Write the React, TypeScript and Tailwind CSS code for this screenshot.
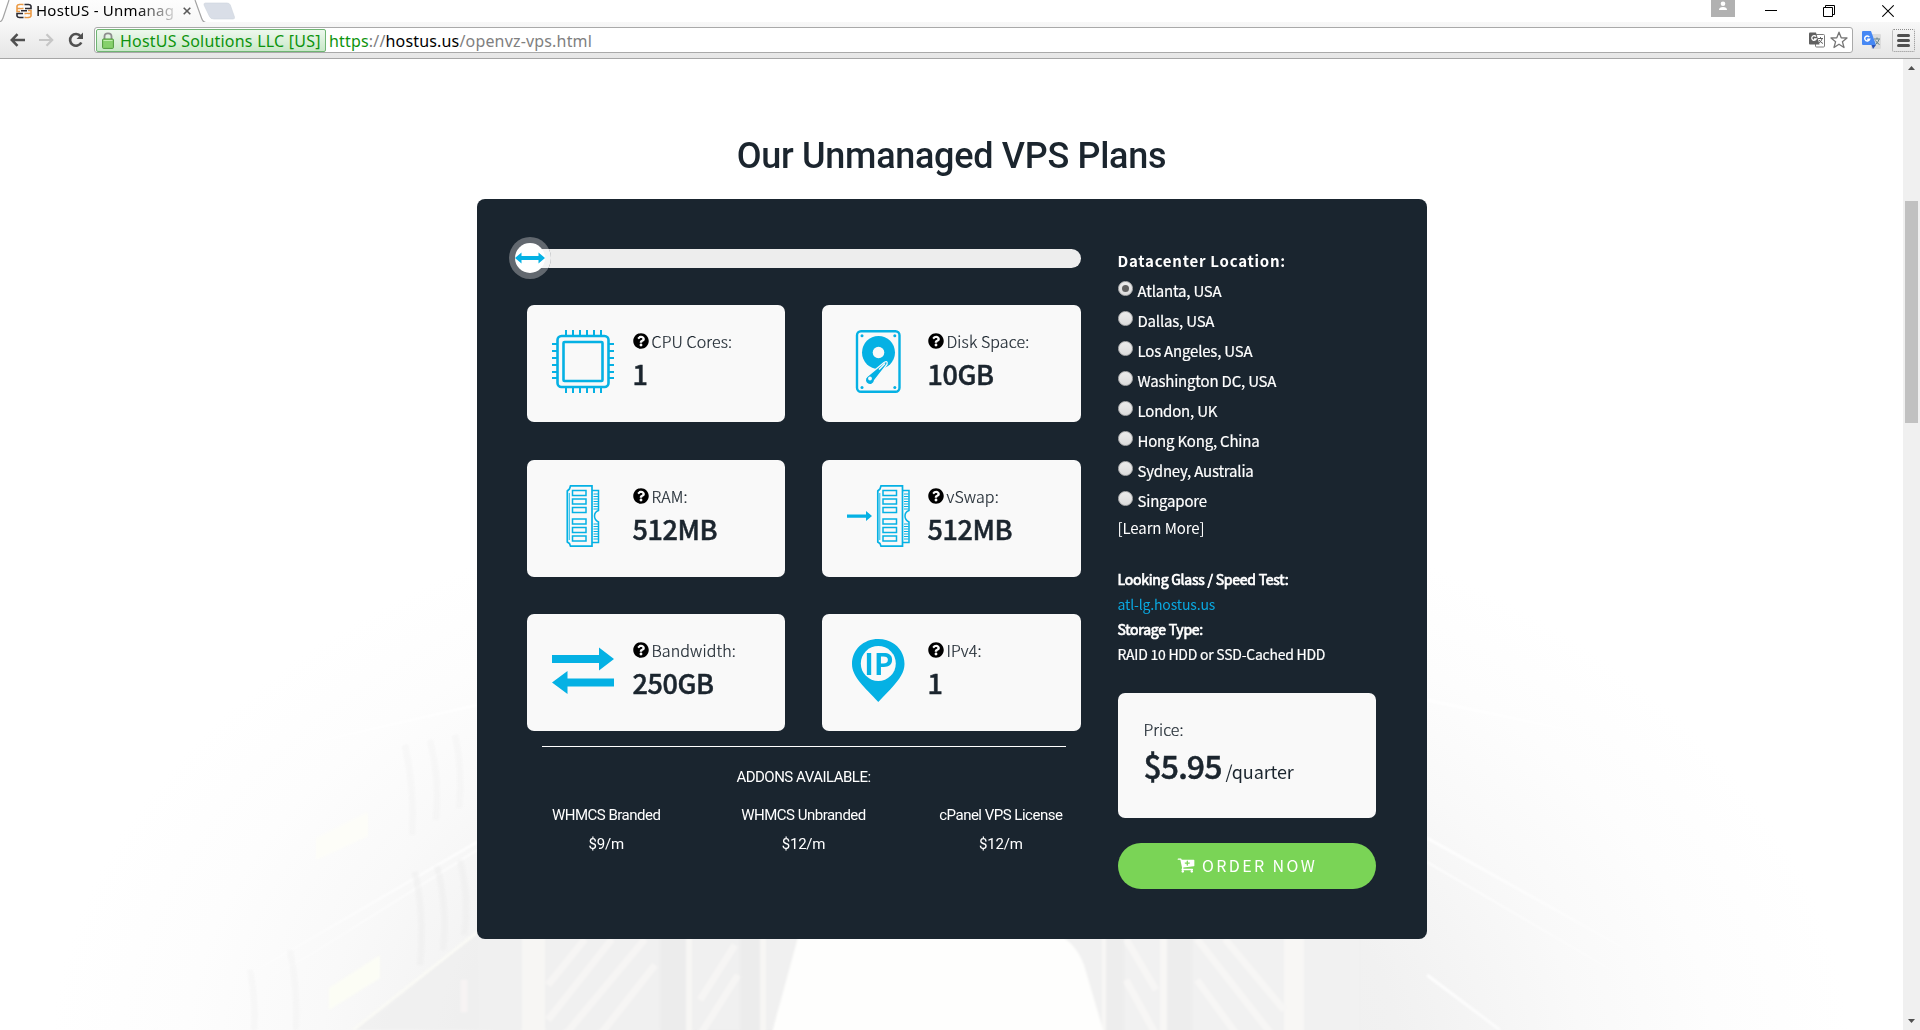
import type { ReactNode } from "react";
import { FaQuestionCircle } from "react-icons/fa";

const BLUE = "#05b1e4";

/* ---------- browser chrome ---------- */

function TabStrip() {
  return (
    <div className="relative flex h-[22px] items-start bg-white">
      <svg className="absolute left-0 top-0" width="1920" height="24" viewBox="0 0 1920 24" fill="none">
        <defs>
          <linearGradient id="tab" x1="0" y1="0" x2="0" y2="1">
            <stop offset="0" stopColor="#fdfdfd" />
            <stop offset="1" stopColor="#f7f7f7" />
          </linearGradient>
        </defs>
        <path d="M0 24V22Q2 21 3 18L9 0H195L201.500 18Q203 22.500 206 22.500H1920V24Z" fill="url(#tab)" />
        <path d="M0 22Q2 21 3 18L9 0M195 0L201.500 18Q203 22.500 206 22.500H1920" stroke="#a3a3a3" strokeWidth="1.200" />
        <path d="M205.500 3H227Q229.500 3 230.300 5L234.500 17Q235 19 233 19H214Q210.500 19 209.500 16.500L204 5Q203.500 3 205.500 3Z" fill="#d9dee7" stroke="#cfd5de" strokeWidth="0.600" />
      </svg>
      <svg className="relative ml-[16px] mt-[3px]" width="16" height="16" viewBox="0 0 16 16" fill="none" strokeWidth="1.600">
        <path d="M7.500 1.500H3.500Q1.500 1.500 1 3V5.500H7.500M1 5.500V8.500H4" stroke="#eb9a45" />
        <path d="M8.500 10.500H15V13Q14.500 14.500 12.500 14.500H8.500M15 10V7.500H12" stroke="#eb9a45" />
        <path d="M8.500 1.500H12.500Q14.500 1.500 15 3V5.500H9M5 7.800H11" stroke="#2b2b33" />
        <path d="M7 10.500H1V13Q1.500 14.500 3.500 14.500H7.500" stroke="#2b2b33" />
        <path d="M5 2V5M11 11V14" stroke="#fff" strokeWidth="1" />
      </svg>
      <div className="relative ml-1 h-[22px] w-[140px] whitespace-nowrap font-['Noto_Sans'] text-[15px] leading-[20px] tracking-[0.25px] text-black [mask-image:linear-gradient(to_right,black_100px,transparent_145px)]">
        HostUS - Unmanag
      </div>
      <svg className="relative ml-[7px] mt-[7px]" width="8" height="8" viewBox="0 0 8 8">
        <path d="M0.700 0.700L7.300 7.300M7.300 0.700L0.700 7.300" stroke="#5a5a5a" strokeWidth="1.600" />
      </svg>
      <div className="relative ml-auto flex h-[17px] items-start">
        <div className="flex h-[17px] w-6 justify-center bg-[#b1b1b1]">
          <svg width="10" height="10" viewBox="0 0 10 10" fill="white">
            <circle cx="5" cy="3.800" r="2.300" />
            <path d="M1 10Q1 7 5 7T9 10Z" />
          </svg>
        </div>
        <svg className="ml-[30px]" width="12" height="17" viewBox="0 0 12 17">
          <path d="M0 10.500H12" stroke="black" />
        </svg>
        <svg className="ml-[46px]" width="12" height="17" viewBox="0 0 12 17" fill="none" stroke="black">
          <path d="M0.500 7.500H9.500V16.500H0.500ZM2.500 7V5.500H11.500V14.500H10" />
        </svg>
        <svg className="ml-[47px] mr-[26px]" width="12" height="17" viewBox="0 0 12 17">
          <path d="M0.300 5.300L11.700 16.700M11.700 5.300L0.300 16.700" stroke="black" strokeWidth="1.100" />
        </svg>
      </div>
    </div>
  );
}

function Toolbar() {
  return (
    <div className="relative flex h-[37px] items-center border-b border-[#a6a6a6] bg-gradient-to-b from-[#f8f8f8] to-[#e6e6e6]">
      <svg className="ml-[10px]" width="15" height="14" viewBox="0 0 15 14" fill="none" stroke="#505050" strokeWidth="2.500">
        <path d="M15 7H2M7.500 1.200L1.800 7L7.500 12.800" />
      </svg>
      <svg className="ml-[14px]" width="15" height="14" viewBox="0 0 15 14" fill="none" stroke="#c6c6c6" strokeWidth="2.200">
        <path d="M0 7H13M7.500 1.200L13.200 7L7.500 12.800" />
      </svg>
      <svg className="ml-[14px]" width="16" height="16" viewBox="0 0 16 16" fill="none">
        <path d="M12.600 4.200A5.900 5.900 0 1 0 13.300 10.500" stroke="#505050" strokeWidth="2.600" />
        <path d="M15 0.500V7H8.500Z" fill="#505050" />
      </svg>
      <div className="ml-[10px] flex h-[26px] w-[1759px] items-center rounded-[3px] border border-[#a9a9a9] bg-white pl-px">
        <div className="flex h-[23px] w-[230px] items-center rounded-[2px] border border-[#6fb573] bg-gradient-to-b from-[#eef8ee] to-[#c9e8c8] pl-[5px]">
          <svg width="12" height="17" viewBox="0 0 12 17">
            <path d="M2.500 8V4.500Q2.500 1.300 6 1.300T9.500 4.500V8" fill="none" stroke="#8d8d8d" strokeWidth="1.800" />
            <rect x="0.600" y="7" width="10.800" height="9.400" rx="0.800" fill="#86d16c" stroke="#4f9a3b" />
            <path d="M1.500 8.500H10.500" stroke="#c2eeb0" />
          </svg>
          <span className="ml-[6px] mt-px whitespace-nowrap font-['Noto_Sans'] text-[16px] leading-[20px] tracking-[0.22px] text-[#0d930d]">HostUS Solutions LLC [US]</span>
        </div>
        <div className="ml-[3px] mt-px whitespace-nowrap font-['Noto_Sans'] text-[16px] leading-[22px] tracking-[0.17px] text-[#808080]">
          <span className="text-[#0d930d]">https</span>://<span className="text-black">hostus.us</span>/openvz-vps.html
        </div>
        <svg className="ml-auto" width="16" height="16" viewBox="0 0 16 16">
          <rect x="6.500" y="2.500" width="9" height="12.500" rx="1" fill="white" stroke="#7a7a7a" />
          <path d="M0 1.500Q0 0.500 1 0.500H7L10.500 12.500H1Q0 12.500 0 11.500Z" fill="#606060" />
          <path d="M7 4.700A2.300 2.300 0 1 0 7.200 7H5" stroke="white" strokeWidth="1.300" fill="none" />
          <path d="M9 6.500H14M11.500 5V6.500M13 7Q12 10 9.500 11.500M10 8Q11.500 10.500 14 11.500" stroke="#606060" fill="none" />
        </svg>
        <svg className="ml-[5px] mr-1" width="18" height="18" viewBox="0 0 18 18">
          <path d="M9 1.200L11.200 6.800L17 7L12.400 10.700L14 16.500L9 13.200L4 16.500L5.600 10.700L1 7L6.800 6.800Z" fill="white" stroke="#757575" strokeWidth="1.300" strokeLinejoin="round" />
        </svg>
      </div>
      <svg className="ml-[9px]" width="19" height="20" viewBox="0 0 19 20">
        <rect x="9" y="4" width="10" height="15" rx="1" fill="#dcdcdc" />
        <path d="M0 2Q0 1 1 1H9L14 15H1Q0 15 0 14Z" fill="#4688f4" />
        <path d="M9.500 15H14L11 19Z" fill="#2a52b8" />
        <path d="M7.300 7A2.500 2.500 0 1 0 7.600 9.200H5.200" stroke="white" strokeWidth="1.500" fill="none" />
        <path d="M12 9H18M15 7.500V9M17 9.500Q16 13 13.500 14.500M13.500 10.500Q15 13.500 17.500 14.500" stroke="#5f7f86" fill="none" />
      </svg>
      <div className="ml-[11px] flex h-[23px] w-[23px] flex-col items-center justify-center gap-[2px] rounded-[2px] border border-dotted border-[#8c8c8c]">
        <i className="h-[3px] w-[13px] rounded-sm bg-[#505050]" />
        <i className="h-[3px] w-[13px] rounded-sm bg-[#505050]" />
        <i className="h-[3px] w-[13px] rounded-sm bg-[#505050]" />
      </div>
    </div>
  );
}

function Scrollbar() {
  return (
    <div className="flex w-[17px] flex-col items-center bg-[#f0f0f0]">
      <svg className="mt-[7px]" width="7" height="4" viewBox="0 0 7 4">
        <path d="M0 4L3.500 0L7 4Z" fill="#505050" />
      </svg>
      <div className="mt-[131px] h-[222px] w-[13px] bg-[#c1c1c1]" />
      <svg className="mb-[7px] mt-auto" width="7" height="4" viewBox="0 0 7 4">
        <path d="M0 0L3.500 4L7 0Z" fill="#505050" />
      </svg>
    </div>
  );
}

/* ---------- faded server-room backdrop ---------- */

function Backdrop() {
  return (
    <svg className="absolute left-0 top-0" width="1903" height="971" viewBox="0 59 1903 971" fill="none">
      <defs>
        <radialGradient id="glow" gradientUnits="userSpaceOnUse" cx="950" cy="1060" r="900" gradientTransform="translate(950 1060) scale(1 0.650) translate(-950 -1060)">
          <stop offset="0" stopColor="#ebebeb" />
          <stop offset="0.500" stopColor="#f1f1f1" />
          <stop offset="0.700" stopColor="#f9f9f9" />
          <stop offset="0.850" stopColor="#fdfdfd" />
          <stop offset="1" stopColor="#ffffff" />
        </radialGradient>
        <linearGradient id="rackFade" gradientUnits="userSpaceOnUse" x1="150" y1="0" x2="477" y2="0">
          <stop offset="0" stopColor="#fff" stopOpacity="0" />
          <stop offset="1" stopColor="#fff" stopOpacity="0.900" />
        </linearGradient>
        <linearGradient id="rackFadeRight" gradientUnits="userSpaceOnUse" x1="1427" y1="0" x2="1700" y2="0">
          <stop offset="0" stopColor="#fff" stopOpacity="0.900" />
          <stop offset="1" stopColor="#fff" stopOpacity="0" />
        </linearGradient>
        <filter id="soft" x="-5%" y="-5%" width="110%" height="110%">
          <feGaussianBlur stdDeviation="1.300" />
        </filter>
      </defs>
      <rect x="0" y="59" width="1903" height="971" fill="url(#glow)" />
      <g filter="url(#soft)">
        <g stroke="url(#rackFade)" strokeWidth="2.500">
          <path d="M150 1030L300 945L477 842" />
          <path d="M170 1030L310 955L477 850" strokeWidth="1.500" />
          <path d="M210 766L477 705" />
        </g>
        <g stroke="#ececec" strokeWidth="6" opacity="0.500">
          <path d="M415 872Q425 920 420 965M437 866Q448 910 443 950M460 860Q470 900 464 935" />
          <path d="M290 950Q298 990 296 1030M250 970Q256 1000 254 1030" opacity="0.500" />
          <path d="M405 745Q415 790 412 835M430 740Q440 780 436 820M455 735Q463 770 459 808" opacity="0.600" />
        </g>
        <path d="M355 1030L480 932V1030Z" fill="#ededed" opacity="0.600" />
        <path d="M353 1030L480 930" stroke="#fafaf6" strokeWidth="3" />
        <path d="M316 838L368 812V836L316 860Z" fill="#fdfdf8" />
        <path d="M329 988L380 955V978L329 1010Z" fill="#fcfdf5" />
        <path d="M464 980V1012" stroke="#f7f3f3" strokeWidth="7" />

        <path d="M480 930H804L772 1030H480Z" fill="#f0f0f0" />
        <path d="M522 930H545V1040H522ZM686 930H692V1040H686ZM760 930H766V1040H760Z" fill="#f7f6f4" />
        <path d="M660 930H686V1040H660ZM740 930H760V1040H740Z" fill="#ececec" />
        <g stroke="#f6f5f4" strokeWidth="7">
          <path d="M548 985L585 939M548 1020L612 939M565 1035L645 939M600 1035L655 965M700 1000L735 945M700 1035L738 975" />
        </g>

        <path d="M1062 930H1360V1040H1104Z" fill="#f1f1f1" />
        <path d="M1102 930H1106V1040H1102ZM1160 930H1167V1040H1160ZM1284 930H1304V1040H1284Z" fill="#f8f7f5" />
        <path d="M1106 930H1124V1040H1106ZM1167 930H1192V1040H1167Z" fill="#ededed" />
        <g stroke="#f7f6f5" strokeWidth="7">
          <path d="M1126 939L1156 990M1126 980L1156 1035M1197 939L1272 1035M1225 939L1284 1010M1197 980L1237 1035" />
        </g>

        <path d="M800 930H1050Q1075 940 1084 965L1106 1040H770Z" fill="#fefefd" />
        <g stroke="url(#rackFadeRight)" strokeWidth="3">
          <path d="M1427 838L1690 985M1427 700L1640 745M1427 975L1500 1030" />
          <path d="M1427 862L1620 975" strokeWidth="2" />
        </g>
      </g>
    </svg>
  );
}

/* ---------- plan icons ---------- */

function CpuIcon() {
  const top = [14, 21, 28, 35, 42, 49];
  const side = [14, 21, 28, 35, 42, 48];
  return (
    <svg width="62" height="63" viewBox="0 0 62 63" fill="none" stroke={BLUE}>
      <rect x="5.500" y="6" width="51" height="51" rx="4" strokeWidth="2.600" />
      <rect x="11.500" y="12" width="39" height="39" rx="1" strokeWidth="2.600" />
      <g strokeWidth="2">
        {top.map((x) => (
          <path key={x} d={`M${x} 0V5M${x} 58V63`} />
        ))}
        {side.map((y) => (
          <path key={y} d={`M0 ${y}H5M57 ${y}H62`} />
        ))}
      </g>
    </svg>
  );
}

function DiskIcon() {
  return (
    <svg width="62" height="63" viewBox="0 0 62 63" fill="none">
      <rect x="10" y="1.200" width="42.500" height="60.600" rx="4" stroke={BLUE} strokeWidth="2.400" />
      <circle cx="31.500" cy="22.500" r="16.500" fill={BLUE} />
      <circle cx="31.500" cy="22.500" r="5.800" fill="#f9f9f9" />
      <path d="M37 32.500L20 46.500A4.600 4.600 0 1 0 27.500 50.500L40 34.500Q41 30 37 32.500Z" fill={BLUE} stroke="#f9f9f9" strokeWidth="1.300" />
      <path d="M38 33.500L32 39.500" stroke="#f9f9f9" strokeWidth="1.400" />
      <circle cx="23" cy="48.500" r="1.900" fill="#f9f9f9" />
      <g fill={BLUE}>
        <circle cx="15" cy="5.800" r="1.500" />
        <circle cx="47.800" cy="5.800" r="1.500" />
        <circle cx="15" cy="57.500" r="1.500" />
        <circle cx="47.800" cy="57.500" r="1.500" />
      </g>
    </svg>
  );
}

function Stick() {
  const chips = [5.5, 14, 22.5, 34, 42.5, 51];
  const pins = [9, 11.5, 14, 16.5, 19, 21.5, 24, 39, 41.5, 44, 46.5, 49, 51.5, 54];
  return (
    <g stroke={BLUE} fill="none">
      <path d="M4 0.800H25.500V61.200H4L3 58.500L0.800 57V6L3 4Z" strokeWidth="1.700" />
      <path d="M2.800 8V55" strokeWidth="0.900" />
      {chips.map((y) => (
        <rect key={y} x="6" y={y} width="13.500" height="5" strokeWidth="1.500" />
      ))}
      <path d="M25.500 5.500H32V25.500Q28 27 28 31T32 37V57.500H25.500" strokeWidth="1.500" />
      {pins.map((y) => (
        <path key={y} d={`M27 ${y}H31.500`} strokeWidth="1" />
      ))}
    </g>
  );
}

function RamIcon() {
  return (
    <svg width="62" height="63" viewBox="0 0 62 63">
      <g transform="translate(14.500 0)">
        <Stick />
      </g>
    </svg>
  );
}

function SwapIcon() {
  return (
    <svg width="62" height="63" viewBox="0 0 62 63" overflow="visible">
      <path d="M0 29.500H19V26L25 31L19 36V32.700H0Z" fill={BLUE} />
      <g transform="translate(30 0)">
        <Stick />
      </g>
    </svg>
  );
}

function BandwidthIcon() {
  return (
    <svg width="62" height="63" viewBox="0 0 62 63" fill={BLUE}>
      <path d="M0 16H47V8.500L62 20L47 31.500V24H0Z" />
      <path d="M62 39.500H15.500V32L0 43.500L15.500 55V47.500H62Z" />
    </svg>
  );
}

function IpIcon() {
  return (
    <svg width="62" height="63" viewBox="0 0 62 63">
      <path d="M31.300 0C46 0 57.500 10.500 57.500 25C57.500 38 45 48 31.300 63C17.500 48 5 38 5 25C5 10.500 16.500 0 31.300 0Z" fill={BLUE} />
      <circle cx="31.300" cy="24.500" r="17.500" fill="#f9f9f9" />
      <text x="31.800" y="36" textAnchor="middle" fill={BLUE} className="font-['Noto_Sans_CJK_SC',sans-serif] text-[29px] font-bold">
        IP
      </text>
    </svg>
  );
}

/* ---------- plan panel ---------- */

function Feature({ icon, label, value }: { icon: ReactNode; label: string; value: string }) {
  return (
    <div className="flex h-[117px] items-start rounded-[7px] bg-[#f9f9f9] pl-[25px] text-[#1b252e]">
      <div className="mt-[25px] shrink-0">{icon}</div>
      <div className="ml-[19px] mt-6 whitespace-nowrap">
        <div className="flex items-center text-[16px] font-light leading-6 tracking-[0.1px] [-webkit-text-stroke:0.2px_#1b252e]">
          <FaQuestionCircle className="mr-[3px] text-[16px] text-black" />
          {label}
        </div>
        <div className="mt-px text-[27px] font-medium leading-[40px] tracking-[-0.4px] [-webkit-text-stroke:0.5px_#1b252e]">{value}</div>
      </div>
    </div>
  );
}

const features = [
  { icon: <CpuIcon />, label: "CPU Cores:", value: "1" },
  { icon: <DiskIcon />, label: "Disk Space:", value: "10GB" },
  { icon: <RamIcon />, label: "RAM:", value: "512MB" },
  { icon: <SwapIcon />, label: "vSwap:", value: "512MB" },
  { icon: <BandwidthIcon />, label: "Bandwidth:", value: "250GB" },
  { icon: <IpIcon />, label: "IPv4:", value: "1" },
];

const locations = [
  "Atlanta, USA",
  "Dallas, USA",
  "Los Angeles, USA",
  "Washington DC, USA",
  "London, UK",
  "Hong Kong, China",
  "Sydney, Australia",
  "Singapore",
];

const addons = [
  { name: "WHMCS Branded", price: "$9/m" },
  { name: "WHMCS Unbranded", price: "$12/m" },
  { name: "cPanel VPS License", price: "$12/m" },
];

function PlanSlider() {
  return (
    <div className="relative -ml-[18px] mt-[38px] flex h-[42px] w-[572px] items-center">
      <div className="ml-[14px] h-[19px] flex-1 rounded-full bg-[#ededed]" />
      <div className="absolute left-0 top-0 flex h-[42px] w-[42px] items-center justify-center overflow-hidden rounded-full bg-[#62686f]">
        <div className="absolute right-0 top-[12px] h-[19px] w-[12px] bg-[#f4f4f4]" />
        <div className="relative flex h-[30px] w-[30px] items-center justify-center rounded-full bg-white">
          <svg width="30" height="12" viewBox="0 0 30 12">
            <path d="M0 6L6.500 0.500V4H23.500V0.500L30 6L23.500 11.500V8H6.500V11.500Z" fill={BLUE} />
          </svg>
        </div>
      </div>
    </div>
  );
}

function Addons() {
  return (
    <div className="font-[Roboto,sans-serif] text-[15px] tracking-[-0.5px] text-white">
      <div className="mx-[15px] mt-[15px] h-px bg-white" />
      <div className="mt-[18px] text-center leading-6">ADDONS AVAILABLE:</div>
      <div className="-mx-[19px] mt-[12px] grid grid-cols-3">
        {addons.map((a) => (
          <div key={a.name} className="whitespace-nowrap text-center leading-[29px]">
            <div>{a.name}</div>
            <div className="tracking-[-0.2px]">{a.price}</div>
          </div>
        ))}
      </div>
    </div>
  );
}

function CartPlus() {
  return (
    <svg className="mr-[7px]" width="18" height="18" viewBox="0 0 1664 1792" fill="currentColor">
      <path d="M1216 704q0-26-19-45t-45-19h-128v-128q0-26-19-45t-45-19-45 19-19 45v128h-128q-26 0-45 19t-19 45 19 45 45 19h128v128q0 26 19 45t45 19 45-19 19-45v-128h128q26 0 45-19t19-45zm-576 832q0 53-37.500 90.500t-90.500 37.500-90.500-37.500-37.500-90.500 37.500-90.500 90.500-37.500 90.500 37.500 37.500 90.500zm896 0q0 53-37.500 90.500t-90.500 37.500-90.500-37.500-37.500-90.500 37.500-90.500 90.500-37.500 90.500 37.500 37.500 90.500zm128-1088v512q0 24-16 42.500t-41 21.500l-1044 122q1 7 4.500 21.500t6 26.500 2.500 22q0 16-24 64h920q26 0 45 19t19 45-19 45-45 19h-1024q-26 0-45-19t-19-45q0-14 11-39.500t29.500-59.500 20.500-38l-177-823h-204q-26 0-45-19t-19-45 19-45 45-19h256q16 0 28.500 6.500t20 15.500 13 24.500 7.500 26.500 5.500 29.500 4.500 25.500h1201q26 0 45 19t19 45z" />
    </svg>
  );
}

function OrderColumn() {
  return (
    <div className="ml-[37px] w-[258px] pt-[50px] text-[15px] text-white">
      <div className="text-[15px] font-bold leading-6 tracking-[0.75px]">Datacenter Location:</div>
      <div className="mt-[2px]">
        {locations.map((name, i) => (
          <div key={name} className="flex h-[30px] items-start leading-[32px] tracking-[-0.2px] [-webkit-text-stroke:0.2px_white]">
            <span className="mt-[6px] flex h-[15px] w-[15px] items-center justify-center rounded-full border border-[#b4b4b4] bg-gradient-to-b from-[#ececec] to-[#dcdcdc]">
              {i === 0 && <span className="h-[7px] w-[7px] rounded-full bg-[#606060]" />}
            </span>
            <span className="ml-[5px] whitespace-nowrap">{name}</span>
          </div>
        ))}
      </div>
      <div className="leading-[26px] tracking-[-0.1px]">[Learn More]</div>
      <div className="mt-[26px] whitespace-nowrap text-[14px] leading-[25px] tracking-[-0.25px]">
        <div className="tracking-[-0.23px] [-webkit-text-stroke:0.7px_white]">Looking Glass / Speed Test:</div>
        <div className="text-[#0aa8e0] tracking-[-0.15px]">atl-lg.hostus.us</div>
        <div className="tracking-[-0.23px] [-webkit-text-stroke:0.7px_white]">Storage Type:</div>
        <div className="[-webkit-text-stroke:0.2px_white]">RAID 10 HDD or SSD-Cached HDD</div>
      </div>
      <div className="mt-[26px] h-[125px] rounded-[7px] bg-[#f9f9f9] pl-[26px] pt-6 text-[#1b252e]">
        <div className="text-[16px] font-light leading-6 [-webkit-text-stroke:0.2px_#1b252e]">Price:</div>
        <div className="whitespace-nowrap text-[18px] leading-[48px] tracking-[-0.1px]">
          <span className="text-[32px] font-medium tracking-[-0.9px] [-webkit-text-stroke:0.5px_#1b252e]">$5.95</span> /quarter
        </div>
      </div>
      <div className="mt-[25px] flex h-[46px] items-center justify-center rounded-full bg-[#7ad456] pb-[2px] pl-px text-[16px] tracking-[2.4px]">
        <CartPlus />
        ORDER NOW
      </div>
    </div>
  );
}

export default function App() {
  return (
    <div className="flex h-[1030px] w-[1920px] flex-col overflow-hidden bg-white">
      <TabStrip />
      <Toolbar />
      <div className="flex flex-1">
        <main className="relative w-[1903px] overflow-hidden">
          <Backdrop />
          <div className="relative flex flex-col items-center font-['Noto_Sans_CJK_SC',sans-serif]">
            <h1 className="mt-[73px] whitespace-nowrap font-[Roboto,sans-serif] text-[36px] font-medium leading-[48px] tracking-[-0.3px] text-[#1b252e]">
              Our Unmanaged VPS Plans
            </h1>
            <section className="mt-[19px] flex h-[740px] w-[950px] rounded-lg bg-[#1a252f]">
              <div className="ml-[50px] w-[554px]">
                <PlanSlider />
                <div className="mt-[26px] grid grid-cols-[258px_259px] gap-x-[37px] gap-y-[37.5px]">
                  {features.map((f) => (
                    <Feature key={f.label} {...f} />
                  ))}
                </div>
                <Addons />
              </div>
              <OrderColumn />
            </section>
          </div>
        </main>
        <Scrollbar />
      </div>
    </div>
  );
}
